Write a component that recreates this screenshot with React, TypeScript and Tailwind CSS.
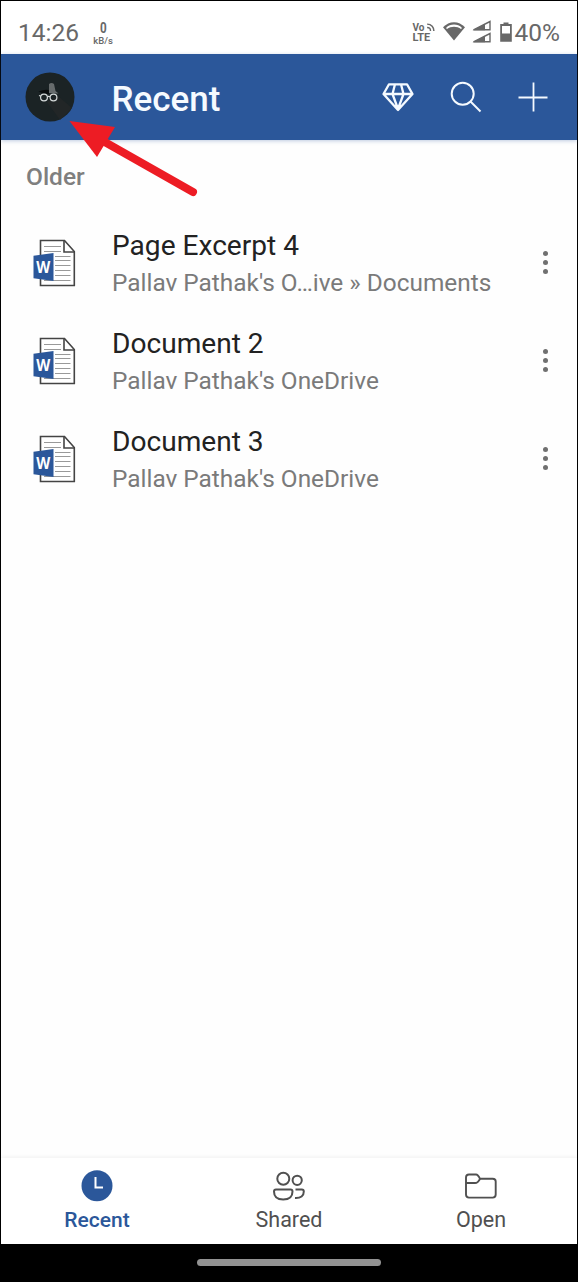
import { twMerge } from 'tailwind-merge'

interface DocumentItem {
  id: string
  title: string
  location: string
}

const documents: DocumentItem[] = [
  { id: '1', title: 'Page Excerpt 4', location: "Pallav Pathak's O…ive » Documents" },
  { id: '2', title: 'Document 2', location: "Pallav Pathak's OneDrive" },
  { id: '3', title: 'Document 3', location: "Pallav Pathak's OneDrive" },
]

function VolteIcon() {
  return (
    <div className="relative h-5 w-[22px] leading-[10px] font-bold">
      <div className="text-[10px]">Vo</div>
      <div className="text-[11px]">LTE</div>
      <svg
        className="absolute top-0 right-0 size-[9px]"
        viewBox="0 0 8 8"
        fill="none"
        stroke="currentColor"
        strokeWidth="1.3"
      >
        <path d="M1 1c4 0 6 3 6 6M1 4c2 0 3 1 3 3" />
      </svg>
    </div>
  )
}

function WifiIcon() {
  return (
    <svg className="h-[20px] w-[24px]" viewBox="0 0 24 20">
      <path d="M1 6.3C7-.6 17-.6 23 6.3L12 19.5Z" fill="currentColor" />
      <path d="M4 6.9C8.5 2.5 15.5 2.5 20 6.9L19 8C15 4.9 9 4.9 5 8Z" fill="#fff" />
    </svg>
  )
}

function SignalIcon() {
  return (
    <svg className="h-[23px] w-[19px]" viewBox="0 0 19 23" fill="none" stroke="currentColor">
      <path d="M1.5 9.8 18 1.5v8.3Z" strokeWidth="1.4" />
      <path d="M.5 10.2 13 3.8v6.4Z" fill="currentColor" stroke="none" />
      <path d="M1.5 21.8 18 13.5v8.3Z" strokeWidth="1.4" />
      <path d="M.5 22.2 13 15.8v6.4Z" fill="currentColor" stroke="none" />
    </svg>
  )
}

function BatteryIcon() {
  return (
    <svg className="h-5 w-3" viewBox="0 0 12 20" fill="none">
      <path d="M1.1 3h9.8v15.8H1.1Z" stroke="currentColor" strokeWidth="1.8" />
      <path d="M3.5.5h5v3h-5ZM1 11.5h10V19H1Z" fill="currentColor" />
    </svg>
  )
}

function StatusBar() {
  return (
    <div className="flex h-[53px] items-start bg-white text-[#686868]">
      <span className="mt-[18px] ml-[17px] w-[62px] text-[24.5px] leading-7">14:26</span>
      <div className="mt-[19px] ml-[12px] w-[22px] text-center">
        <div className="text-[15.5px] leading-[17px] font-bold">
          <span className="inline-block scale-x-75">0</span>
        </div>
        <div className="-mt-px text-[9.5px] leading-[10px] font-medium">kB/s</div>
      </div>
      <div className="mt-[22px] ml-auto"><VolteIcon /></div>
      <div className="mt-[20px] ml-[7px]"><WifiIcon /></div>
      <div className="mt-[19px] ml-[6px]"><SignalIcon /></div>
      <div className="mt-[21px] ml-[9px]"><BatteryIcon /></div>
      <span className="mt-[18px] mr-[17px] ml-[3px] text-[24.5px] leading-7">40%</span>
    </div>
  )
}

function Avatar() {
  return (
    <svg className="size-[50px]" viewBox="0 0 50 50" fill="none">
      <circle cx="25" cy="25" r="24.5" fill="#1b2325" />
      <path d="m33 24 14 12-12 12-13-18Z" fill="#222627" />
      <path d="M24 12q2.5-2 5 0l1.5 7 3 2.5-9.5-.5Z" fill="#666b6c" />
      <path d="M13.5 19.5q6-2.5 10.5-1.5v4q-6 0-10.5-2.5Z" fill="#080c0d" />
      <g stroke="#d5dada" strokeWidth="1.2">
        <circle cx="19" cy="25.5" r="3.4" />
        <circle cx="28.5" cy="25.5" r="3.4" />
        <path d="M22.5 24.7q1.2-.8 2.5 0M14 23.5l2 .8" />
      </g>
    </svg>
  )
}

function Header() {
  return (
    <header className="relative flex h-[86px] items-center bg-[#2b579a] pl-6 text-[#f5faff] shadow-[0_1px_4px_rgba(43,87,154,0.3)]">
      <Avatar />
      <h1 className="mt-[5px] ml-[36.5px] text-[35px] leading-10 font-medium">Recent</h1>
      <svg
        className="mr-[36px] ml-auto h-[30px] w-[32px]"
        viewBox="0 0 32 30"
        fill="none"
        stroke="currentColor"
        strokeWidth="2.3"
        strokeLinejoin="round"
      >
        <path d="M7 2.3h18L30.5 12 16 28 1.5 12ZM1.5 12h29M13 2.3 10.5 12 16 27l5.5-15L19 2.3" />
      </svg>
      <svg
        className="mr-[36px] size-[32px]"
        viewBox="0 0 32 32"
        fill="none"
        stroke="currentColor"
        strokeWidth="2"
      >
        <circle cx="12.7" cy="12.7" r="11" />
        <path d="m20.5 20.5 10 10" />
      </svg>
      <svg
        className="mr-[29px] size-[30px]"
        viewBox="0 0 30 30"
        stroke="currentColor"
        strokeWidth="1.8"
      >
        <path d="M15.5.5v29M.5 15.5h29" />
      </svg>
    </header>
  )
}

function WordIcon() {
  return (
    <svg className="h-[48px] w-[43px]" viewBox="0 0 43 48" fill="none">
      <path d="M7.5 1.5h24l9.8 11v34H7.5Z" fill="#fff" stroke="#444" strokeWidth="1.6" />
      <path d="M31 2v11h10.5" stroke="#444" strokeWidth="1.6" />
      <path
        d="M11 7.5h17M11 12.5h17M22 17.5h15.5M22 21.5h15.5M22 26.5h15.5M22 31.5h15.5M22 36.5h15.5M11 41.5h26.5"
        stroke="#999"
        strokeWidth="1.2"
      />
      <path d="m.5 16.8 20-2.8v28L.5 39.2Z" fill="#2b579a" />
      <text
        x="10.3"
        y="33.8"
        textAnchor="middle"
        textLength="14"
        lengthAdjust="spacingAndGlyphs"
        fontFamily="Open Sans, sans-serif"
        fontSize="16.5"
        fontWeight="700"
        fill="#fff"
      >
        W
      </text>
    </svg>
  )
}

function DocumentRow({ document }: { document: DocumentItem }) {
  return (
    <li className="flex h-[98px] items-center pr-[29px] pl-8">
      <WordIcon />
      <div className="mt-[2px] ml-[36px] min-w-0 flex-1 whitespace-nowrap">
        <p className="text-[28.1px] leading-[38px] text-[#222]">{document.title}</p>
        <p className="text-[24.4px] leading-[36px] text-[#7a7a7a]">{document.location}</p>
      </div>
      <button type="button" aria-label="More options" className="-mt-[1px] flex flex-col gap-1">
        <span className="size-[5px] rounded-full bg-[#707070]" />
        <span className="size-[5px] rounded-full bg-[#707070]" />
        <span className="size-[5px] rounded-full bg-[#707070]" />
      </button>
    </li>
  )
}

function ClockIcon() {
  return (
    <svg className="size-8" viewBox="0 0 32 32" fill="none">
      <circle cx="16" cy="15.7" r="15.5" fill="#2b579a" />
      <path d="M14.5 7v10.5H22" stroke="#fff" strokeWidth="2" />
    </svg>
  )
}

function PeopleIcon() {
  return (
    <svg className="size-8" viewBox="0 0 32 32" fill="none" stroke="currentColor" strokeWidth="2">
      <circle cx="10.3" cy="8.7" r="6" />
      <circle cx="24.2" cy="10.3" r="4.6" />
      <path d="M3 19.5h14.5q2 0 2 2c0 5-3 8-9.3 8s-9.2-3-9.2-8q0-2 2-2ZM22.5 19.5h6.3q2 0 2 2c0 4.5-3 6.8-8.8 6.5" />
    </svg>
  )
}

function FolderIcon() {
  return (
    <svg
      className="size-8"
      viewBox="0 0 32 32"
      fill="none"
      stroke="currentColor"
      strokeWidth="1.9"
      strokeLinejoin="round"
    >
      <path d="M4 4.5h7q2 0 4 4.3h12.7q3 0 3 2.8v13q0 3-3 3H4q-3 0-3-3V7.4q0-2.9 3-2.9Z" />
      <path d="M1 13h9q3 0 5-4.2" />
    </svg>
  )
}

const tabs = [
  { label: 'Recent', icon: ClockIcon, active: true },
  { label: 'Shared', icon: PeopleIcon, active: false },
  { label: 'Open', icon: FolderIcon, active: false },
]

function TabBar() {
  return (
    <nav className="grid h-[86px] grid-cols-3 bg-white shadow-[0_-1px_4px_rgba(0,0,0,0.06)]">
      {tabs.map(({ label, icon: Icon, active }) => (
        <button
          key={label}
          type="button"
          className={twMerge(
            'flex flex-col items-center pt-3 text-[21.5px] text-[#505050]',
            active && 'text-[21px] font-medium text-[#2b579a]',
          )}
        >
          <Icon />
          <span className="mt-[4px] leading-7">{label}</span>
        </button>
      ))}
    </nav>
  )
}

function PointerArrow() {
  return (
    <svg
      className="pointer-events-none absolute top-[116px] left-[66px] h-[84px] w-[136px]"
      viewBox="66 116 136 84"
    >
      <path d="m103 141 90 51" stroke="#ed1c24" strokeWidth="8" strokeLinecap="round" />
      <path d="m69.5 121 45.5 6-18 30Z" fill="#ed1c24" />
    </svg>
  )
}

export default function App() {
  return (
    <div className="relative flex h-[1282px] w-[578px] flex-col overflow-hidden bg-black px-px pt-px font-[Roboto,sans-serif]">
      <StatusBar />
      <Header />
      <main className="flex-1 bg-[#fefefe]">
        <h2 className="pt-[20px] pl-[25px] text-[24.5px] leading-[34px] font-medium text-[#7f7f7f]">
          Older
        </h2>
        <ul className="mt-[20px]">
          {documents.map((document) => (
            <DocumentRow key={document.id} document={document} />
          ))}
        </ul>
      </main>
      <TabBar />
      <div className="flex h-[38px] justify-center pt-[15px]">
        <div className="h-[7px] w-[184px] rounded-full bg-[#929292]" />
      </div>
      <PointerArrow />
    </div>
  )
}
